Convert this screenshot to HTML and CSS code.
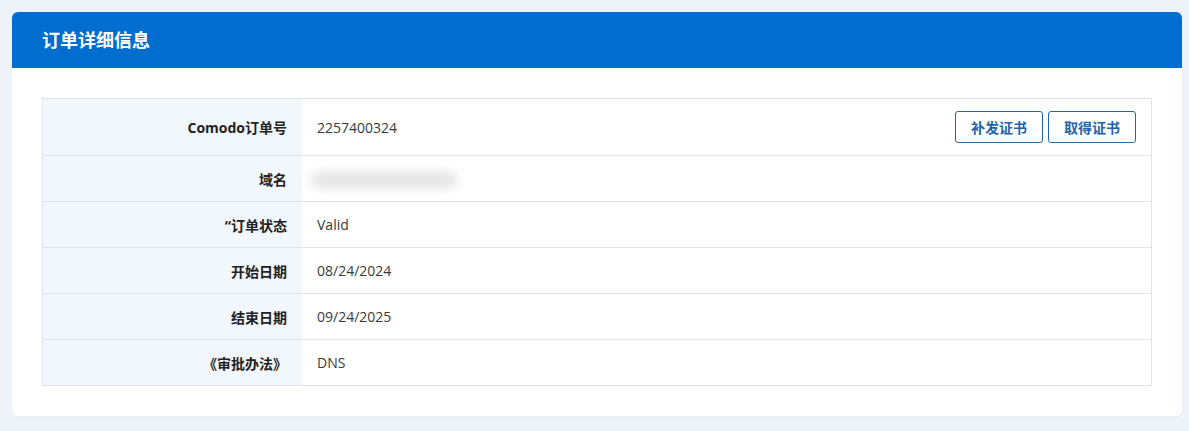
FILE: index.html
```html
<!DOCTYPE html>
<html lang="zh">
<head>
<meta charset="utf-8">
<link rel="stylesheet" href="styles.css">
</head>
<body>
<div class="card">
  <div class="card-header">订单详细信息</div>
  <div class="card-body">
    <table class="details">
      <tr class="first">
        <th>Comodo订单号</th>
        <td>
          <div class="value-row">
            <span>2257400324</span>
            <div class="actions">
              <button class="btn">补发证书</button>
              <button class="btn">取得证书</button>
            </div>
          </div>
        </td>
      </tr>
      <tr>
        <th>域名</th>
        <td><span class="blurred"></span></td>
      </tr>
      <tr>
        <th>“订单状态</th>
        <td>Valid</td>
      </tr>
      <tr>
        <th>开始日期</th>
        <td>08/24/2024</td>
      </tr>
      <tr>
        <th>结束日期</th>
        <td>09/24/2025</td>
      </tr>
      <tr>
        <th>《审批办法》</th>
        <td>DNS</td>
      </tr>
    </table>
  </div>
</div>
</body>
</html>
```
FILE: styles.css
```css
html, body {
  margin: 0;
  padding: 0;
}
body {
  background: #eef2f9;
  font-family: "Open Sans", "Noto Sans CJK SC", sans-serif;
  padding: 12px 7px 16px 12px;
  color: #333;
}
.card {
  background: #fff;
  border-radius: 6px;
  overflow: hidden;
  box-shadow: 0 1px 3px rgba(0, 0, 0, 0.04);
}
.card-header {
  background: #006dcf;
  color: #fff;
  font-weight: 700;
  font-size: 18px;
  height: 56px;
  line-height: 56px;
  padding-left: 30px;
}
.card-body {
  padding: 30px;
}
.details {
  width: 100%;
  border-collapse: collapse;
  border: 1px solid #e0e3e8;
  font-size: 14px;
}
.details tr {
  border-bottom: 1px solid #e0e3e8;
}
.details th {
  width: 244px;
  background: #f2f6fd;
  text-align: right;
  font-weight: 700;
  color: #222;
  padding: 0 15px 0 0;
  height: 45px;
  font-size: 14px;
}
.details td {
  padding: 0 15px;
  color: #3a3a3a;
  height: 45px;
}
.details tr.first th,
.details tr.first td {
  height: 56px;
}
.value-row {
  display: flex;
  align-items: center;
  justify-content: space-between;
}
.actions {
  display: flex;
  gap: 5px;
}
.btn {
  width: 88px;
  height: 32px;
  border: 1px solid #1f64ad;
  border-radius: 3px;
  background: #fff;
  color: #1f64ad;
  font-family: "Noto Sans CJK SC", sans-serif;
  font-weight: 700;
  font-size: 14px;
  padding: 0;
}
.blurred {
  display: inline-block;
  width: 146px;
  height: 18px;
  background: #e6e6e6;
  border-radius: 9px;
  filter: blur(5px);
  vertical-align: middle;
  margin-left: -6px;
}
```
